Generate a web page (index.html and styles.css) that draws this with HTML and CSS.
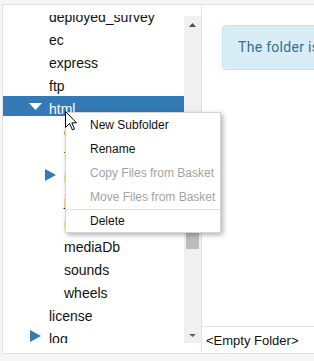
FILE: index.html
```html
<!DOCTYPE html>
<html lang="en">
<head>
  <meta charset="UTF-8">
  <title>File Manager</title>
  <link rel="stylesheet" href="styles.css">
</head>
<body>
  <div class="window">
    <div class="tree-pane">
      <div class="tree-scroll">
        <ul class="tree">
          <li class="row"><span class="toggle"></span><span class="label">deployed_survey</span></li>
          <li class="row"><span class="toggle"></span><span class="label">ec</span></li>
          <li class="row"><span class="toggle"></span><span class="label">express</span></li>
          <li class="row"><span class="toggle"></span><span class="label">ftp</span></li>
          <li class="row selected">
            <span class="toggle">
              <svg width="13" height="7" viewBox="0 0 13 7"><path d="M0 0H13L6.5 7Z" fill="#fff"/></svg>
            </span>
            <span class="label">html</span>
          </li>
          <li class="row depth-1"><span class="toggle"></span><span class="label">css</span></li>
          <li class="row depth-1"><span class="toggle"></span><span class="label">fonts</span></li>
          <li class="row depth-1">
            <span class="toggle">
              <svg width="11" height="12" viewBox="0 0 11 12"><path d="M0 0L11 6L0 12Z" fill="#337ab7"/></svg>
            </span>
            <span class="label">images</span>
          </li>
          <li class="row depth-1"><span class="toggle"></span><span class="label">js</span></li>
          <li class="row depth-1"><span class="toggle"></span><span class="label">media</span></li>
          <li class="row depth-1"><span class="toggle"></span><span class="label">mediaDb</span></li>
          <li class="row depth-1"><span class="toggle"></span><span class="label">sounds</span></li>
          <li class="row depth-1"><span class="toggle"></span><span class="label">wheels</span></li>
          <li class="row"><span class="toggle"></span><span class="label">license</span></li>
          <li class="row">
            <span class="toggle">
              <svg width="11" height="12" viewBox="0 0 11 12"><path d="M0 0L11 6L0 12Z" fill="#337ab7"/></svg>
            </span>
            <span class="label">log</span>
          </li>
        </ul>
      </div>
      <div class="scrollbar">
        <div class="sb-button">
          <svg width="7" height="4" viewBox="0 0 7 4"><path d="M3.5 0L7 4H0Z" fill="#505050"/></svg>
        </div>
        <div class="sb-track">
          <div class="sb-thumb"></div>
        </div>
        <div class="sb-button down">
          <svg width="7" height="3" viewBox="0 0 7 3"><path d="M0 0H7L3.5 3Z" fill="#606060"/></svg>
        </div>
      </div>
    </div>

    <div class="content-pane">
      <div class="alert">The folder is empty</div>
      <div class="status">&lt;Empty Folder&gt;</div>
    </div>
  </div>

  <!-- right-click menu for the selected folder -->
  <ul class="context-menu">
    <li class="menu-item">New Subfolder</li>
    <li class="menu-item">Rename</li>
    <li class="menu-item disabled">Copy Files from Basket</li>
    <li class="menu-item disabled">Move Files from Basket</li>
    <li class="menu-separator"></li>
    <li class="menu-item last">Delete</li>
  </ul>

  <svg class="cursor" width="13" height="20" viewBox="0 0 13 20">
    <path d="M0.5 0.5V16.5L4.5 12.5L7.5 19L9.5 18L6.8 11.8H11.5Z" fill="#fff" stroke="#000" stroke-width="1"/>
  </svg>
</body>
</html>
```

FILE: styles.css
```css
body {
  margin: 0;
  background-color: #f6f6f6;
  font-family: "Liberation Sans", Arial, sans-serif;
  overflow: hidden;
  position: relative;
  height: 361px;
}

.window {
  display: flex;
  width: 400px;
  height: 348px;
  margin: 4px 0 0 2px;
  border: 1px solid #e2e2e2;
  background-color: #fff;
}

/* folder tree on the left */
.tree-pane {
  display: flex;
  flex-shrink: 0;
  width: 199px;
  height: 348px;
  padding: 10px 0 10px 0;
  border-right: 1px solid #e2e2e2;
  box-sizing: border-box;
}

.tree-scroll {
  flex: 1;
  overflow: hidden;
}

.tree {
  list-style: none;
  margin: -11px 0 0 0;
  padding: 0;
}

.row {
  display: flex;
  align-items: flex-start;
  height: 20px;
  margin-bottom: 3px;
  padding-left: 25px;
  font-size: 14px;
  color: #111;
  white-space: nowrap;
}

.row.depth-1 {
  padding-left: 40px;
}

.row.selected {
  background-color: #337ab7;
  color: #fff;
}

.toggle {
  display: flex;
  justify-content: center;
  align-items: center;
  width: 14px;
  height: 20px;
  margin-right: 7px;
  flex-shrink: 0;
}

.label {
  padding-top: 4px;
  line-height: 18px;
}

.scrollbar {
  display: flex;
  flex-direction: column;
  flex-shrink: 0;
  width: 17px;
  margin-top: 1px;
  background-color: #f0f0f0;
}

.sb-button {
  display: flex;
  justify-content: center;
  align-items: center;
  height: 17px;
}

.sb-button.down {
  height: 16px;
}

.sb-track {
  flex: 1;
}

.sb-thumb {
  margin: 117px 2px 0 2px;
  height: 99px;
  background-color: #bdbdbd;
}

/* right side */
.content-pane {
  flex: 1;
  display: flex;
  flex-direction: column;
  min-width: 0;
}

.alert {
  margin: 20px 0 0 20px;
  padding: 14px 15px;
  width: 300px;
  line-height: 15px;
  font-family: Roboto, "Liberation Sans", sans-serif;
  font-size: 14px;
  letter-spacing: 0.3px;
  color: #31708f;
  background-color: #d9edf7;
  border: 1px solid #bce8f1;
  border-radius: 4px;
  white-space: nowrap;
}

.status {
  margin-top: auto;
  height: 26px;
  line-height: 27px;
  padding-left: 4px;
  border-top: 1px solid #e2e2e2;
  font-size: 13px;
  color: #111;
  white-space: nowrap;
}

/* context menu */
.context-menu {
  position: absolute;
  left: 65px;
  top: 112px;
  width: 154px;
  margin: 0;
  padding: 0;
  list-style: none;
  background-color: #fff;
  border: 1px solid #d4d4d4;
  box-shadow: 2px 2px 5px rgba(0, 0, 0, 0.3);
}

.menu-item {
  height: 24px;
  line-height: 24px;
  padding-left: 24px;
  font-size: 12px;
  color: #111;
  white-space: nowrap;
}

.menu-item.disabled {
  color: #a3a3a3;
}

.menu-item.last {
  height: 22px;
  line-height: 22px;
}

.menu-separator {
  height: 1px;
  background-color: #e0e0e0;
}

.cursor {
  position: absolute;
  left: 65px;
  top: 111px;
}
```
